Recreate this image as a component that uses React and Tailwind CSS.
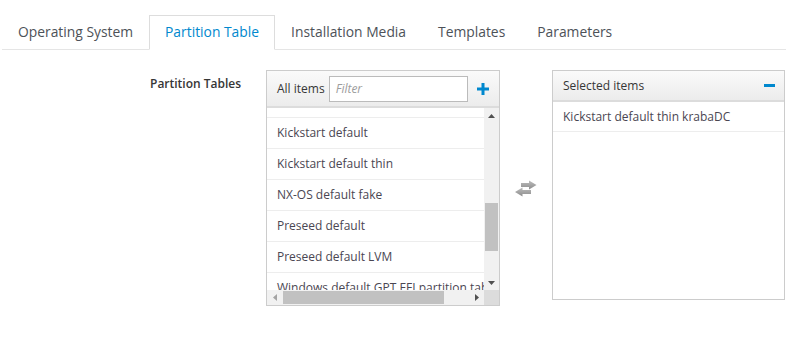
import React, { useEffect, useRef } from "react";

const tabs = [
  "Operating System",
  "Partition Table",
  "Installation Media",
  "Templates",
  "Parameters",
];

const available = [
  "Alterator default",
  "AutoYaST entire SCSI disk",
  "AutoYaST entire virtual disk",
  "AutoYaST LVM",
  "CoreOS default fake",
  "FreeBSD",
  "Jumpstart default",
  "Jumpstart mirrored",
  "Junos default fake",
  "Kickstart custom",
  "Kickstart default",
  "Kickstart default thin",
  "NX-OS default fake",
  "Preseed default",
  "Preseed default LVM",
  "Windows default GPT EFI partition table",
  "Windows default",
  "XenServer default",
];

const selected = ["Kickstart default thin krabaDC"];

// icono de intercambio entre las dos listas
const SwapIcon = () => (
  <svg width="24" height="17" viewBox="0 0 24 17">
    <defs>
      <linearGradient id="swapg" x1="0" y1="0" x2="0" y2="1">
        <stop offset="0" stopColor="#bdbdbd" />
        <stop offset="1" stopColor="#8c8c8c" />
      </linearGradient>
    </defs>
    <path d="M7 3 H15 V0.5 L22.5 5 L15 9.5 V7 H7 Z" fill="url(#swapg)" />
    <path d="M17 10 H8.5 V7.5 L1 12 L8.5 16.5 V14 H17 Z" fill="url(#swapg)" />
  </svg>
);

const PlusIcon = () => (
  <svg width="12" height="12" viewBox="0 0 12 12">
    <rect x="4.5" y="0" width="3" height="12" fill="#0088ce" />
    <rect x="0" y="4.5" width="12" height="3" fill="#0088ce" />
  </svg>
);

const MinusIcon = () => (
  <svg width="11" height="3" viewBox="0 0 11 3">
    <rect x="0" y="0" width="11" height="3" fill="#0088ce" />
  </svg>
);

// flechas de la barra de desplazamiento
const Arrow = ({ dir, color = "#505050" }) => {
  const pts = {
    up: "0,4 3.5,0 7,4",
    down: "0,0 3.5,4 7,0",
    left: "4,0 0,3.5 4,7",
    right: "0,0 4,3.5 0,7",
  }[dir];
  const vertical = dir === "up" || dir === "down";
  return (
    <div className="w-[15px] h-[15px] shrink-0 flex items-center justify-center">
      <svg
        width={vertical ? 7 : 4}
        height={vertical ? 4 : 7}
        viewBox={vertical ? "0 0 7 4" : "0 0 4 7"}
      >
        <polygon points={pts} fill={color} />
      </svg>
    </div>
  );
};

export default function App() {
  const listRef = useRef(null);

  useEffect(() => {
    if (listRef.current) listRef.current.scrollTop = 300;
  }, []);

  return (
    <div
      className="w-[786px] h-[356px] bg-white text-[#363636] overflow-hidden"
      style={{ fontFamily: '"Open Sans", "Liberation Sans", sans-serif' }}
    >
      {/* Pestañas */}
      <ul className="flex mt-[15px] ml-[2px] border-b border-[#e5e5e5]">
        {tabs.map((t) => {
          const active = t === "Partition Table";
          return (
            <li
              key={t}
              className={`h-[35px] -mb-px px-[15px] flex items-center border text-[13.85px] ${
                active
                  ? "border-[#dddddd] border-b-white bg-white text-[#0088ce]"
                  : "border-transparent text-[#4d5258]"
              }`}
            >
              {t}
            </li>
          );
        })}
      </ul>

      {/* Formulario */}
      <div className="flex items-start mt-[20px] pl-[150px]">
        <label className="w-[116px] pt-[5px] text-[12px] font-semibold text-[#363636]">
          Partition Tables
        </label>

        {/* Lista disponible */}
        <div className="w-[234px] h-[236px] border border-[#cccccc] flex flex-col">
          <div className="h-[37px] shrink-0 flex items-center pl-[10px] pr-[10px] border-b-2 border-[#dcdcdc] bg-gradient-to-b from-[#fafafa] to-[#ececec]">
            <span className="text-[12px] mr-[4px]">All items</span>
            <div className="w-[139px] h-[26px] border border-[#bbbbbb] bg-white flex items-center px-[6px] text-[12px] italic text-[#9c9c9c]">
              Filter
            </div>
            <div className="flex-1 flex justify-end">
              <PlusIcon />
            </div>
          </div>

          <div className="flex-1 flex flex-col min-h-0">
            <div className="flex-1 flex min-h-0">
              <div ref={listRef} className="flex-1 overflow-hidden">
                <div className="min-w-full w-max">
                  {available.map((item) => (
                    <div
                      key={item}
                      className="h-[31px] px-[10px] flex items-center border-b border-[#ededed] text-[12px] whitespace-nowrap text-[#4a4652]"
                    >
                      {item}
                    </div>
                  ))}
                </div>
              </div>
              {/* barra vertical */}
              <div className="w-[15px] shrink-0 bg-[#f1f1f1] flex flex-col">
                <Arrow dir="up" />
                <div className="h-[80px] shrink-0" />
                <div className="h-[48px] shrink-0 mx-[1px] bg-[#c1c1c1]" />
                <div className="flex-1" />
                <Arrow dir="down" />
              </div>
            </div>
            {/* barra horizontal */}
            <div className="h-[15px] shrink-0 flex">
              <div className="flex-1 flex items-center bg-[#f1f1f1]">
                <Arrow dir="left" color="#a3a3a3" />
                <div className="w-[161px] h-[13px] ml-[1px] bg-[#c1c1c1]" />
                <div className="flex-1" />
                <Arrow dir="right" />
              </div>
              <div className="w-[15px] bg-[#dcdcdc]" />
            </div>
          </div>
        </div>

        {/* Icono central */}
        <div className="w-[52px] h-[236px] flex items-center justify-center">
          <SwapIcon />
        </div>

        {/* Lista seleccionada */}
        <div className="w-[233px] h-[230px] border border-[#cccccc] flex flex-col">
          <div className="h-[31px] shrink-0 flex items-center justify-between pl-[10px] pr-[9px] border-b-2 border-[#dcdcdc] bg-gradient-to-b from-[#fafafa] to-[#ececec]">
            <span className="text-[12px]">Selected items</span>
            <MinusIcon />
          </div>
          {selected.map((item) => (
            <div
              key={item}
              className="h-[30px] px-[10px] flex items-center border-b border-[#ededed] text-[12px] text-[#4a4652]"
            >
              {item}
            </div>
          ))}
        </div>
      </div>
    </div>
  );
}
